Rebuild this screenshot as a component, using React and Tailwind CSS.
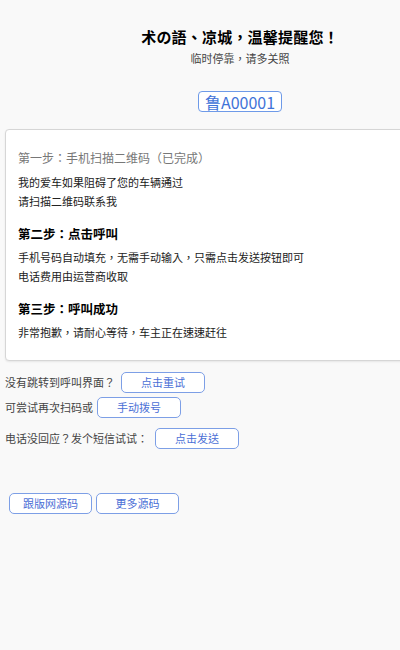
import React from "react";

const font = { fontFamily: '"Noto Sans CJK TC", "Noto Sans CJK SC", "Noto Sans", sans-serif' };

const LinkButton = ({ children, className = "" }) => (
  <button
    className={`h-[21px] rounded-[5px] border border-[#7d9fe6] bg-white text-[11px] leading-none text-[#4b6fd6] ${className}`}
  >
    {children}
  </button>
);

const App = () => {
  return (
    <div className="min-h-[650px] w-[400px] overflow-hidden bg-[#f9f9f9] text-[#222]" style={font}>
      <div className="w-[480px]">
        <div className="flex flex-col items-center pt-[27px]">
          <h1 className="text-[15px] font-bold leading-[20px] text-black tracking-[0.2px]">
            术の語、凉城，温馨提醒您！
          </h1>
          <p className="mt-[1px] text-[11px] leading-[20px] text-[#444]">临时停靠，请多关照</p>
          <div className="mt-[23px] flex h-[21px] items-center rounded-[4px] border border-[#6e9ae8] bg-white px-[6px] text-[16px] leading-none text-[#3f73d8]">
            鲁A00001
          </div>
        </div>

        <div className="mx-[5px] mt-[17px] rounded-[4px] border border-[#d6d6d6] bg-white px-[12px] pt-[18px] pb-[18px] shadow-[0_1px_2px_rgba(0,0,0,0.08)]">
          <p className="text-[12px] leading-[19px] text-[#777]">第一步：手机扫描二维码（已完成）</p>
          <p className="mt-[6px] text-[11px] leading-[19px]">我的爱车如果阻碍了您的车辆通过</p>
          <p className="text-[11px] leading-[19px]">请扫描二维码联系我</p>

          <h2 className="mt-[13px] text-[12.5px] font-bold leading-[20px] text-black">第二步：点击呼叫</h2>
          <p className="mt-[4px] text-[11px] leading-[19px]">手机号码自动填充，无需手动输入，只需点击发送按钮即可</p>
          <p className="text-[11px] leading-[19px]">电话费用由运营商收取</p>

          <h2 className="mt-[13px] text-[12.5px] font-bold leading-[20px] text-black">第三步：呼叫成功</h2>
          <p className="mt-[4px] text-[11px] leading-[19px]">非常抱歉，请耐心等待，车主正在速速赶往</p>
        </div>

        <div className="px-[5px] pt-[11px] text-[11px] text-[#444]">
          <div className="flex items-center gap-[6px]">
            <span>没有跳转到呼叫界面？</span>
            <LinkButton className="w-[84px]">点击重试</LinkButton>
          </div>
          <div className="mt-[4px] flex items-center gap-[4px]">
            <span>可尝试再次扫码或</span>
            <LinkButton className="w-[84px]">手动拨号</LinkButton>
          </div>
          <div className="mt-[10px] flex items-center gap-[7px]">
            <span>电话没回应？发个短信试试：</span>
            <LinkButton className="w-[84px]">点击发送</LinkButton>
          </div>
        </div>

        <div className="mt-[44px] flex gap-[4px] px-[9px]">
          <LinkButton className="w-[83px]">跟版网源码</LinkButton>
          <LinkButton className="w-[83px]">更多源码</LinkButton>
        </div>
      </div>
    </div>
  );
};

export default App;
